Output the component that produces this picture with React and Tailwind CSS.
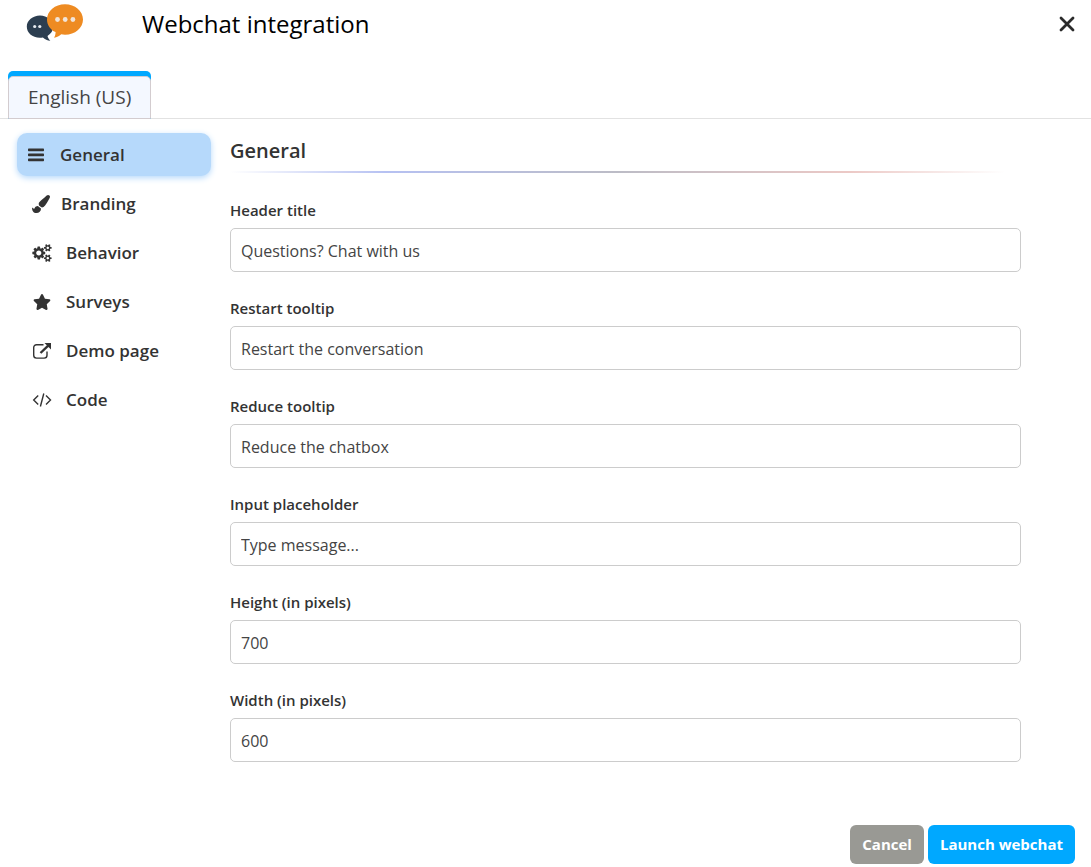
import { useState } from "react";
import { FaPaintBrush, FaStar } from "react-icons/fa";

function Logo() {
  return (
    <svg viewBox="0 0 58 38" className="h-[38px] w-[58px]" aria-hidden="true">
      <path
        fill="#2c3e50"
        d="M14 11.500c7.300 0 13.200 5 13.200 11 0 4-2.200 7.300-5.700 9.400.4 1.900 1.400 3.300 2.900 4.900-3-.3-5.600-1.600-7.500-3.300-9.300 1.500-16.100-4-16.100-11C.8 16.500 6.700 11.500 14 11.500Z"
      />
      <circle cx="8.700" cy="22.500" r="1.600" fill="#e6ebf0" />
      <circle cx="13.800" cy="22.500" r="1.600" fill="#e6ebf0" />
      <path
        fill="#ee8b22"
        d="M39 .2c10 0 18 6.800 18 15.200 0 8.500-8 15.300-18 15.300-1.300 0-2.600-.1-3.800-.4-1.800 1.800-4.300 3.100-7.200 3.500 1.100-1.500 1.600-3.500 1.600-5.700C24.300 25.500 21 20.800 21 15.400 21 7 29 .2 39 .2Z"
      />
      <circle cx="31.500" cy="15.500" r="2.400" fill="#f1e4d8" />
      <circle cx="39.200" cy="15.500" r="2.400" fill="#f1e4d8" />
      <circle cx="46.900" cy="15.500" r="2.400" fill="#f1e4d8" />
    </svg>
  );
}

function BarsIcon() {
  return (
    <svg viewBox="0 0 18 18" className="size-[18px]" fill="currentColor" aria-hidden="true">
      <rect x="1" y="2.500" width="16" height="2.700" rx=".7" />
      <rect x="1" y="7.500" width="16" height="2.700" rx=".7" />
      <rect x="1" y="12.500" width="16" height="2.700" rx=".7" />
    </svg>
  );
}

function CogsIcon() {
  const small =
    "v140q0 16-149 31-12 27-30 52 51 113 51 138 0 4-4 7-122 71-124 71-8 0-46-47t-52-68q-20 2-30 2t-30-2q-14 21-52 68t-46 47q-2 0-124-71-4-3-4-7 0-25 51-138-18-25-30-52-149-15-149-31v-140q0-16 149-31 13-29 30-52-51-113-51-138 0-4 4-7 4-2 35-20t59-34 30-16q8 0 46 46.500t52 67.500q20-2 30-2t30 2q51-71 92-112l6-2q4 0 124 70 4 3 4 7 0 25-51 138 17 23 30 52 149 15 149 31z";
  const hole = "q0-52-38-90t-90-38-90 38-38 90q0 53 37.500 90.500t90.500 37.500 90.500-37.500 37.500-90.500z";
  return (
    <svg viewBox="0 0 1920 1792" className="h-[18px] w-5" fill="currentColor" fillRule="evenodd" aria-hidden="true">
      <path d="M896 896q0-106-75-181t-181-75-181 75-75 181 75 181 181 75 181-75 75-181zm384-91v185q0 10-7 19.500t-16 10.500l-155 24q-11 35-32 76 34 48 90 115 7 11 7 20 0 12-7 19-23 30-82.500 89.500t-78.500 59.500q-11 0-21-7l-115-90q-37 19-77 31-11 108-23 155-7 24-30 24h-186q-11 0-20-7.500t-10-17.500l-23-153q-34-10-75-31l-118 89q-7 7-20 7-11 0-21-8-144-133-144-160 0-9 7-19 10-14 41-53t47-61q-23-44-35-82l-152-24q-10-1-17-9.500t-7-19.500v-185q0-10 7-19.500t16-10.500l155-24q11-35 32-76-34-48-90-115-7-11-7-20 0-12 7-20 22-30 82-89t79-59q11 0 21 7l115 90q34-18 77-32 11-108 23-154 7-24 30-24h186q11 0 20 7.500t10 17.500l23 153q34 10 75 31l118-89q8-7 20-7 11 0 21 8 144 133 144 160 0 8-7 19-12 16-42 54t-45 60q23 48 34 82l152 23q10 2 17 10.500t7 19.500z" />
      <path d={`M1664 1408${hole}M1920 1338${small}`} />
      <path d={`M1664 384${hole}M1920 314${small}`} />
    </svg>
  );
}

function ExternalIcon() {
  return (
    <svg viewBox="0 0 20 18" className="h-[18px] w-5" fill="none" stroke="currentColor" aria-hidden="true">
      <path strokeWidth="1.400" d="M11.500 2.700H4.500A2.800 2.800 0 0 0 1.700 5.500v7.800A2.800 2.800 0 0 0 4.500 16.100h7.700a2.800 2.800 0 0 0 2.800-2.800V9.500" />
      <path strokeWidth="2.400" d="M8.500 11 16.500 3.300" />
      <path fill="currentColor" stroke="none" d="M12.500 1H19v6.500Z" />
    </svg>
  );
}

function CodeIcon() {
  return (
    <svg viewBox="0 0 20 16" className="h-4 w-5" fill="none" stroke="currentColor" strokeWidth="1.400" aria-hidden="true">
      <path d="M6.200 3.500 1.700 8 6.200 12.500M14 3.500 18.500 8 14 12.500M11.800 1.500 8.400 14.500" />
    </svg>
  );
}

const sections = [
  { name: "General", icon: <BarsIcon />, layout: "pl-[10px] gap-[15px]" },
  { name: "Branding", icon: <FaPaintBrush size={18} />, layout: "pl-[15px] gap-[11px]" },
  { name: "Behavior", icon: <CogsIcon />, layout: "pl-[15px] gap-[14px]" },
  { name: "Surveys", icon: <FaStar size={18} />, layout: "pl-4 gap-[15px]" },
  { name: "Demo page", icon: <ExternalIcon />, layout: "pl-[15px] gap-[14px]" },
  { name: "Code", icon: <CodeIcon />, layout: "pl-[15px] gap-[14px]" },
];

const fields = [
  { id: "header-title", label: "Header title", value: "Questions? Chat with us" },
  { id: "restart-tooltip", label: "Restart tooltip", value: "Restart the conversation" },
  { id: "reduce-tooltip", label: "Reduce tooltip", value: "Reduce the chatbox" },
  { id: "input-placeholder", label: "Input placeholder", value: "Type message..." },
  { id: "height", label: "Height (in pixels)", value: "700" },
  { id: "width", label: "Width (in pixels)", value: "600" },
];

export default function App() {
  const [active, setActive] = useState("General");
  return (
    <div className="bg-white font-['Open_Sans',sans-serif] text-[#333]">
      <header className="flex h-[71px] items-start pl-[26px] pr-[14px] pt-1">
        <Logo />
        <h1 className="ml-[58px] flex-1 text-2xl leading-10 text-black">Webchat integration</h1>
        <button type="button" aria-label="Close" className="mt-[10px] flex size-5 items-center justify-center">
          <svg viewBox="0 0 20 20" className="size-5" stroke="#2b2b2b" strokeWidth="2.800" strokeLinecap="round" aria-hidden="true">
            <path d="M4 4l12 12M16 4 4 16" />
          </svg>
        </button>
      </header>

      <div className="flex border-b border-[#e2e2e2] pl-2" role="tablist">
        <button
          type="button"
          role="tab"
          aria-selected="true"
          className="-mb-px rounded-t-[5px] bg-[#00a8ff] pt-[5px] text-[19px] text-[#444]"
        >
          <span className="flex h-[43px] items-center rounded-t-[5px] border border-[#d3cccf] bg-[#f4f8ff] px-[19px]">
            English (US)
          </span>
        </button>
      </div>

      <div className="flex">
        <nav className="w-[213px] shrink-0 pl-[17px] pt-[14px]">
          <ul className="flex w-[194px] flex-col gap-[6px]">
            {sections.map((s) => (
              <li key={s.name}>
                <button
                  type="button"
                  onClick={() => setActive(s.name)}
                  className={`flex h-[43px] w-full items-center rounded-[10px] text-[17px] font-semibold ${s.layout} ${
                    active === s.name ? "bg-[#b6d9fb] shadow-[0_2px_6px_#b6d9fb]" : ""
                  }`}
                >
                  {s.icon}
                  {s.name}
                </button>
              </li>
            ))}
          </ul>
        </nav>

        <main className="flex-1 pl-[17px] pr-[70px] pt-4">
          <h2 className="text-xl leading-8 font-semibold">General</h2>
          <div className="mt-1 mr-4 h-[2px] bg-[linear-gradient(to_right,transparent,#b6c1f2_20%,#bcbcc6_50%,#ecc9c6_80%,transparent)]" />
          <form id="webchat-form" className="mt-[25px] flex flex-col gap-6">
            {fields.map((f) => (
              <div key={f.id} className="flex flex-col gap-[6px]">
                <label htmlFor={f.id} className="text-[15px] leading-6 font-semibold">
                  {f.label}
                </label>
                <input
                  id={f.id}
                  type="text"
                  defaultValue={f.value}
                  className="h-11 w-full rounded-[5px] border border-[#ccc] px-[10px] pt-[2px] text-base text-[#444] outline-none"
                />
              </div>
            ))}
          </form>
        </main>
      </div>

      <footer className="mt-[63px] flex justify-end gap-1 pr-4 text-[15px] font-bold text-white">
        <button type="button" className="h-[39px] rounded-[6px] bg-[#999994] px-3">Cancel</button>
        <button type="submit" form="webchat-form" className="h-[39px] rounded-[6px] bg-[#00a8ff] px-3">Launch webchat</button>
      </footer>
    </div>
  );
}
